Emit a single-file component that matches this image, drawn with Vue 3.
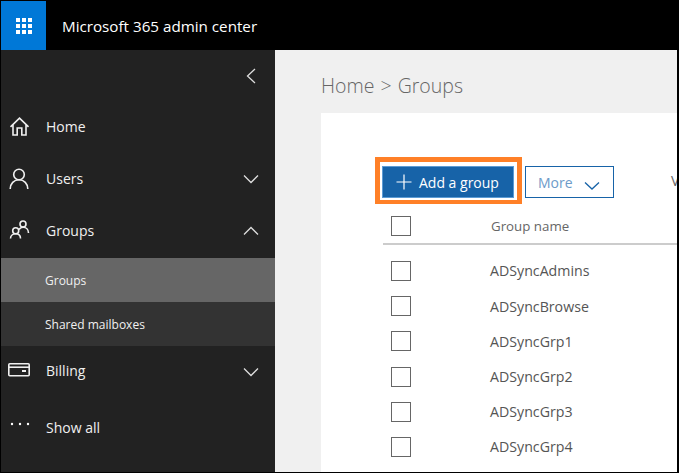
<script setup>
const groupRows = ['ADSyncAdmins', 'ADSyncBrowse', 'ADSyncGrp1', 'ADSyncGrp2', 'ADSyncGrp3', 'ADSyncGrp4']
</script>

<template>
  <div class="window">
    <header class="topbar">
      <div class="waffle">
        <svg width="16" height="16" viewBox="0 0 16 16" fill="#fff">
          <rect x="0" y="0" width="4" height="4" /><rect x="6" y="0" width="4" height="4" /><rect x="12" y="0" width="4" height="4" />
          <rect x="0" y="6" width="4" height="4" /><rect x="6" y="6" width="4" height="4" /><rect x="12" y="6" width="4" height="4" />
          <rect x="0" y="12" width="4" height="4" /><rect x="6" y="12" width="4" height="4" /><rect x="12" y="12" width="4" height="4" />
        </svg>
      </div>
      <span class="app-title">Microsoft 365 admin center</span>
    </header>

    <div class="body">
      <nav class="sidebar">
        <div class="collapse-row">
          <svg width="12" height="16" viewBox="0 0 12 16" class="line-icon"><path d="M10 1 L2.5 8 L10 15" /></svg>
        </div>

        <div class="nav-item">
          <svg class="nav-icon" width="22" height="22" viewBox="0 0 22 22"><path d="M1.5 9.8 L10.5 1.2 L19.5 9.8 M4 7.5 V18 H8.2 V11 H12.8 V18 H17 V7.5" /></svg>
          <span>Home</span>
        </div>
        <div class="nav-item">
          <svg class="nav-icon" width="22" height="22" viewBox="0 0 22 22"><circle cx="10" cy="5.5" r="5.3" /><path d="M1.2 20 C1.2 14.5 5 10.8 10 10.8 C15 10.8 18.8 14.5 18.8 20" /></svg>
          <span>Users</span>
          <svg class="chevron line-icon" width="16" height="10" viewBox="0 0 16 10"><path d="M1 1.5 L8 8.5 L15 1.5" /></svg>
        </div>
        <div class="nav-item">
          <svg class="nav-icon" width="22" height="22" viewBox="0 0 22 22"><circle cx="6.7" cy="9.7" r="3" /><path d="M1.5 17.5 C1.5 14.5 4 12.8 6.7 12.8 C9.4 12.8 11.5 14.5 11.5 17.5" /><circle cx="14" cy="3" r="3" /><path d="M10 8.5 C11 6.8 12.5 6.2 14 6.2 C17 6.2 19.5 8.5 19.5 12" /></svg>
          <span>Groups</span>
          <svg class="chevron line-icon" width="16" height="10" viewBox="0 0 16 10"><path d="M1 8.5 L8 1.5 L15 8.5" /></svg>
        </div>

        <div class="sub-item active">Groups</div>
        <div class="sub-item">Shared mailboxes</div>

        <div class="nav-item billing">
          <svg class="nav-icon" width="22" height="16" viewBox="0 0 22 16"><rect x="0.8" y="2.8" width="20.4" height="12" rx="1" /><path d="M1 6.2 H21" /><rect class="card-chip" x="14" y="9" width="4" height="2" /></svg>
          <span>Billing</span>
          <svg class="chevron line-icon" width="16" height="10" viewBox="0 0 16 10"><path d="M1 1.5 L8 8.5 L15 1.5" /></svg>
        </div>
        <div class="nav-item show-all">
          <svg class="dots" width="20" height="4" viewBox="0 0 20 4" fill="#fff"><circle cx="2" cy="2" r="1.2" /><circle cx="10" cy="2" r="1.2" /><circle cx="18" cy="2" r="1.2" /></svg>
          <span>Show all</span>
        </div>
      </nav>

      <main class="main">
        <h1 class="breadcrumb">Home &gt; Groups</h1>
        <section class="card">
          <div class="toolbar">
            <div class="highlight">
              <button class="add-btn">
                <svg width="16" height="16" viewBox="0 0 16 16"><path d="M8 0.5 V15.5 M0.5 8 H15.5" stroke="#fff" stroke-width="1.2" /></svg>
                Add a group
              </button>
            </div>
            <button class="more-btn">
              More
              <svg class="more-chevron" width="16" height="9" viewBox="0 0 16 9" fill="none"><path d="M1 1.5 L8 8 L15 1.5" stroke="#1763a8" stroke-width="1.3" /></svg>
            </button>
            <span class="view-label">View</span>
          </div>

          <div class="table">
            <div class="table-head">
              <span class="check"></span>
              <span class="col-name">Group name</span>
            </div>
            <div class="rows">
              <div v-for="name in groupRows" :key="name" class="row">
                <span class="check"></span>
                <span class="row-name">{{ name }}</span>
              </div>
            </div>
          </div>
        </section>
      </main>
    </div>
  </div>
</template>

<style>
html, body {
  margin: 0;
  background: #000;
}
</style>

<style scoped>
.window {
  width: 679px;
  height: 473px;
  box-sizing: border-box;
  border: 1px solid #000;
  border-right-width: 2px;
  display: flex;
  flex-direction: column;
  overflow: hidden;
  font-family: "Open Sans", "Noto Sans", sans-serif;
}

.topbar {
  height: 49px;
  flex: none;
  background: #000;
  display: flex;
  align-items: center;
}

.waffle {
  width: 45px;
  height: 100%;
  background: #0078d7;
  display: flex;
  align-items: center;
  justify-content: center;
}

.app-title {
  margin-left: 16px;
  color: #fff;
  font-size: 15.2px;
}

.body {
  flex: 1;
  display: flex;
  min-height: 0;
}

.sidebar {
  width: 274px;
  flex: none;
  background: #222;
  color: #f0f0f0;
  display: flex;
  flex-direction: column;
}

.line-icon {
  fill: none;
  stroke: #ddd;
  stroke-width: 1.3;
}

.collapse-row {
  height: 51px;
  flex: none;
  display: flex;
  align-items: center;
  justify-content: flex-end;
  padding-right: 18px;
  box-sizing: border-box;
}

.nav-item {
  height: 52px;
  flex: none;
  display: flex;
  align-items: center;
  font-size: 14px;
  position: relative;
  padding: 0 0 2px 45px;
  box-sizing: border-box;
}

.nav-icon {
  position: absolute;
  left: 8px;
  top: 16px;
  overflow: visible;
  fill: none;
  stroke: #f0f0f0;
  stroke-width: 1.6;
}

.chevron {
  position: absolute;
  right: 16px;
  top: 21px;
}

.sub-item {
  height: 44px;
  flex: none;
  display: flex;
  align-items: center;
  padding-left: 44px;
  font-size: 12px;
  background: #333;
}

.sub-item.active {
  margin-top: 1px;
  background: #666;
}

.billing {
  padding-bottom: 4px;
}

.billing .nav-icon {
  left: 7px;
  top: 15px;
}

.card-chip {
  fill: #f0f0f0;
  stroke: none;
}

.show-all {
  margin-top: 4px;
}

.dots {
  position: absolute;
  left: 9px;
  top: 20px;
}

.main {
  flex: 1;
  min-width: 0;
  background: #f0f0f0;
  padding-left: 46px;
  display: flex;
  flex-direction: column;
}

.breadcrumb {
  height: 63px;
  box-sizing: border-box;
  flex: none;
  margin: 0;
  padding-top: 8px;
  display: flex;
  align-items: center;
  font-size: 19.5px;
  font-weight: 300;
  word-spacing: 1px;
  color: #666;
}

.card {
  flex: 1;
  background: #fff;
  padding: 44px 0 0 54px;
  overflow: hidden;
}

.toolbar {
  display: flex;
  align-items: flex-start;
  white-space: nowrap;
}

.highlight {
  border: 5px solid #ff8027;
  border-bottom-width: 4px;
  padding: 4px 3px 2px 2px;
  display: flex;
  flex: none;
}

.add-btn {
  width: 132px;
  height: 32px;
  box-sizing: border-box;
  background: #1763a8;
  border: 1px solid #5b9bd5;
  color: #fff;
  font: inherit;
  font-size: 14px;
  display: flex;
  align-items: center;
  gap: 7px;
  padding: 0 0 0 13px;
}

.more-btn {
  margin: 9px 0 0 3px;
  width: 89px;
  height: 32px;
  flex: none;
  box-sizing: border-box;
  background: #fff;
  border: 1px solid #1763a8;
  color: #6d9bc9;
  font: inherit;
  font-size: 14px;
  display: flex;
  align-items: center;
  gap: 11px;
  padding: 0 0 0 12px;
}

.more-chevron {
  margin-top: 6px;
}

.view-label {
  margin: 14px 0 0 57px;
  color: #666;
  font-size: 14px;
}

.table {
  margin-left: 8px;
}

.table-head {
  height: 41px;
  box-sizing: border-box;
  border-bottom: 2px solid #ccc;
  display: flex;
  align-items: flex-start;
  padding: 12px 0 0 8px;
}

.check {
  width: 20px;
  height: 20px;
  box-sizing: border-box;
  border: 1px solid #666;
  flex: none;
}

.col-name {
  margin-left: 80px;
  font-size: 13.3px;
  line-height: 20px;
  color: #666;
}

.rows {
  padding-top: 8.4px;
}

.row {
  height: 35.2px;
  display: flex;
  align-items: center;
  padding-left: 8px;
}

.row-name {
  margin-left: 79px;
  font-size: 14.2px;
  color: #555;
}
</style>
